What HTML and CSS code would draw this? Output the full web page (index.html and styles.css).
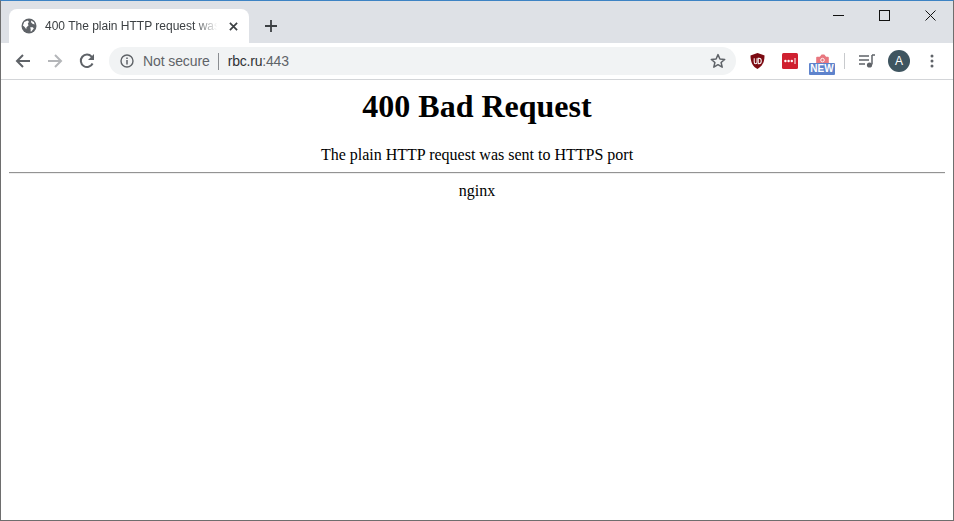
FILE: index.html
```html
<!DOCTYPE html>
<html lang="en">
<head>
<meta charset="utf-8">
<title>400 Bad Request</title>
<link rel="stylesheet" href="styles.css">
</head>
<body>
<div class="window">
  <header class="tabstrip">
    <div class="tab">
      <svg class="favicon" viewBox="0 0 16 16"><circle cx="8" cy="8" r="7.5" fill="#5f6368"/><path d="M3.2 4 6.5 2.6 8 3.8 6.8 5.8 7.6 7.3 5.4 9.6 5.3 11.2 3.4 8.8 1.9 7.4ZM10 2.4 13 4.2 13.6 6.4 11.5 5.8 10.2 4.4ZM9.2 9.2 11.8 9.2 12.8 10.6 10.4 13.4 9.6 13.4 9.7 11.2Z" fill="#fff"/></svg>
      <span class="tab-title">400 The plain HTTP request was sent to HTTPS port</span>
      <svg class="tab-close" viewBox="0 0 10 10"><path d="M1 1 9 9M9 1 1 9" stroke="#3c4043" stroke-width="1.9" fill="none"/></svg>
    </div>
    <svg class="new-tab" viewBox="0 0 12 12"><path d="M6 0V12M0 6H12" stroke="#3c4043" stroke-width="1.8" fill="none"/></svg>
    <div class="window-controls">
      <svg class="ctl" viewBox="0 0 11 11"><path d="M0 5.5H11" stroke="#111" fill="none"/></svg>
      <svg class="ctl" viewBox="0 0 11 11"><rect x=".5" y=".5" width="10" height="10" stroke="#111" fill="none"/></svg>
      <svg class="ctl" viewBox="0 0 11 11"><path d="M.5 .5 10.5 10.5M10.5 .5 .5 10.5" stroke="#111" fill="none"/></svg>
    </div>
  </header>
  <nav class="toolbar">
    <svg class="nav-btn" viewBox="0 0 16 16"><path d="M15 8H2M8 2 2 8l6 6" stroke="#5f6368" stroke-width="2" fill="none"/></svg>
    <svg class="nav-btn" viewBox="0 0 16 16"><path d="M1 8H14M8 2l6 6-6 6" stroke="#b4b6b9" stroke-width="2" fill="none"/></svg>
    <svg class="nav-btn" viewBox="0 0 16 16"><path d="M13.6 10.5A6.2 6.2 0 1 1 12.6 3.6L14.5 5.5" stroke="#5f6368" stroke-width="2" fill="none"/><path d="M15 1V7H9Z" fill="#5f6368"/></svg>
    <div class="omnibox">
      <svg class="info" viewBox="0 0 14 14"><circle cx="7" cy="7" r="6" stroke="#5f6368" stroke-width="1.4" fill="none"/><path d="M7 6V10.5M7 3.4V5" stroke="#5f6368" stroke-width="1.5" fill="none"/></svg>
      <span class="secure">Not secure</span>
      <span class="divider"></span>
      <span class="url">rbc.ru<span class="port">:443</span></span>
      <svg class="star" viewBox="0 0 16 16"><path d="M8 1.6 9.9 6 14.7 6.4 11.1 9.5 12.2 14.2 8 11.7 3.8 14.2 4.9 9.5 1.3 6.4 6.1 6Z" stroke="#5f6368" stroke-width="1.5" stroke-linejoin="round" fill="none"/></svg>
    </div>
    <div class="extensions">
      <svg class="ext-ublock" viewBox="0 0 16 18"><path d="M8 .5 15.5 3C15.5 10 13 15 8 17.5 3 15 .5 10 .5 3Z" fill="#7c0a12"/><path d="M4.5 6V10Q4.5 12 6 12T7.5 10V6" stroke="#fff" stroke-width="1.1" fill="none"/><path d="M8.8 6V12H9.6Q12 12 12 9T9.6 6Z" stroke="#fff" stroke-width="1.1" fill="none"/></svg>
      <svg class="ext-lastpass" viewBox="0 0 16 16"><rect width="16" height="16" rx="1.5" fill="#cf2030"/><circle cx="3.4" cy="8" r="1.2" fill="#fff"/><circle cx="6.6" cy="8" r="1.2" fill="#fff"/><circle cx="9.8" cy="8" r="1.2" fill="#fff"/><path d="M13 5V11" stroke="#fff" stroke-width="1"/></svg>
      <div class="ext-new">
        <svg class="ext-cam" viewBox="0 0 16 10"><path d="M1 10V4Q1 3 2 3H5L7 .5H10L12 3H14Q15 3 15 4V10Z" fill="#e8777f"/><circle cx="8" cy="6.8" r="2" stroke="#fff" fill="none"/></svg>
        <span class="new-badge">NEW</span>
      </div>
      <span class="ext-sep"></span>
      <svg class="ext-media" viewBox="0 0 16 14"><path d="M0 2H10M0 6H10M0 10H6" stroke="#5f6368" stroke-width="1.4" fill="none"/><path d="M13 1V10.5" stroke="#5f6368" stroke-width="1.5" fill="none"/><path d="M13 1H16" stroke="#5f6368" stroke-width="1.5" fill="none"/><circle cx="10.5" cy="11" r="2.6" fill="#5f6368"/></svg>
      <span class="avatar">A</span>
      <svg class="menu" viewBox="0 0 4 14"><circle cx="2" cy="2" r="1.5" fill="#5f6368"/><circle cx="2" cy="7" r="1.5" fill="#5f6368"/><circle cx="2" cy="12" r="1.5" fill="#5f6368"/></svg>
    </div>
  </nav>
  <main class="page">
    <h1 class="title">400 Bad Request</h1>
    <p class="message">The plain HTTP request was sent to HTTPS port</p>
    <hr class="rule">
    <p class="server">nginx</p>
  </main>
</div>
</body>
</html>
```
FILE: styles.css
```css
html, body {
  margin: 0;
  padding: 0;
  height: 100%;
  overflow: hidden;
}
.window {
  box-sizing: border-box;
  width: 954px;
  height: 521px;
  display: flex;
  flex-direction: column;
  border: 1px solid #6e6e6e;
  border-top-color: #3d83c4;
  background: #fff;
}
.tabstrip {
  height: 42px;
  flex: none;
  display: flex;
  align-items: flex-end;
  background: #dee1e6;
  padding-left: 8px;
}
.tab {
  box-sizing: border-box;
  width: 240px;
  height: 34px;
  display: flex;
  align-items: center;
  padding: 0 11px 0 12px;
  background: #fff;
  border-radius: 8px 8px 0 0;
  font: 12px "Liberation Sans", Arial, sans-serif;
  color: #3c4043;
}
.favicon {
  width: 16px;
  height: 16px;
  flex: none;
}
.tab-title {
  flex: 1;
  min-width: 0;
  margin-left: 8px;
  white-space: nowrap;
  overflow: hidden;
  -webkit-mask-image: linear-gradient(to right, #000 85%, transparent 98%);
  mask-image: linear-gradient(to right, #000 85%, transparent 98%);
}
.tab-close {
  width: 9px;
  height: 9px;
  flex: none;
  margin-left: 8px;
}
.new-tab {
  width: 12px;
  height: 12px;
  margin: 0 0 11px 16px;
}
.window-controls {
  margin-left: auto;
  align-self: flex-start;
  display: flex;
  gap: 35px;
  padding: 9px 17px 0 0;
}
.ctl {
  width: 11px;
  height: 11px;
}
.toolbar {
  height: 36px;
  flex: none;
  box-sizing: content-box;
  display: flex;
  align-items: center;
  background: #fff;
  border-bottom: 1px solid #d3d5d8;
  padding-left: 14px;
}
.nav-btn {
  width: 16px;
  height: 16px;
  margin-right: 16px;
}
.omnibox {
  width: 627px;
  height: 28px;
  margin-left: -2px;
  box-sizing: border-box;
  display: flex;
  align-items: center;
  padding: 0 10px 0 11px;
  background: #f1f3f4;
  border-radius: 14px;
  font: 14px "Liberation Sans", Arial, sans-serif;
  color: #5f6368;
}
.info {
  width: 14px;
  height: 14px;
  flex: none;
}
.secure {
  margin-left: 9px;
  letter-spacing: -0.1px;
}
.divider {
  width: 1px;
  height: 17px;
  margin: 0 9px 0 8px;
  background: #8a8d91;
}
.url {
  color: #303134;
  letter-spacing: -0.2px;
}
.port {
  color: #5f6368;
}
.star {
  width: 16px;
  height: 16px;
  margin-left: auto;
}
.extensions {
  display: flex;
  align-items: center;
  flex: 1;
  height: 100%;
  padding-left: 14px;
}
.ext-ublock {
  width: 15px;
  height: 18px;
}
.ext-lastpass {
  width: 16px;
  height: 16px;
  margin-left: 17px;
}
.ext-new {
  width: 26px;
  height: 24px;
  margin: 10px 0 0 11px;
  display: flex;
  flex-direction: column;
  align-items: center;
}
.ext-cam {
  width: 15px;
  height: 9px;
  flex: none;
}
.new-badge {
  width: 26px;
  height: 12px;
  background: #5e83cc;
  border-radius: 1px;
  color: #fff;
  font: bold 10px/12px "Liberation Sans", Arial, sans-serif;
  text-align: center;
}
.ext-sep {
  width: 1px;
  height: 16px;
  margin-left: 9px;
  background: #c8cacd;
}
.ext-media {
  width: 16px;
  height: 14px;
  margin-left: 14px;
}
.avatar {
  width: 22px;
  height: 22px;
  margin-left: 13px;
  border-radius: 50%;
  background: #3f5560;
  color: #fff;
  font: 12px/22px "Liberation Sans", Arial, sans-serif;
  text-align: center;
}
.menu {
  width: 4px;
  height: 14px;
  margin-left: 20px;
}
.page {
  flex: 1;
  padding: 8px 8px 0;
  color: #000;
  font: 16px "Liberation Serif", "Times New Roman", serif;
  text-align: center;
}
.title {
  margin: 0;
  font-size: 32px;
  line-height: 37px;
  font-weight: bold;
}
.message {
  margin: 21px 0 0;
  line-height: 18px;
}
.rule {
  margin: 8px 0 0;
  height: 0;
  border: 0;
  border-top: 1px solid #939393;
  border-bottom: 1px solid #eee;
}
.server {
  margin: 8px 0 0;
  line-height: 18px;
}
```
